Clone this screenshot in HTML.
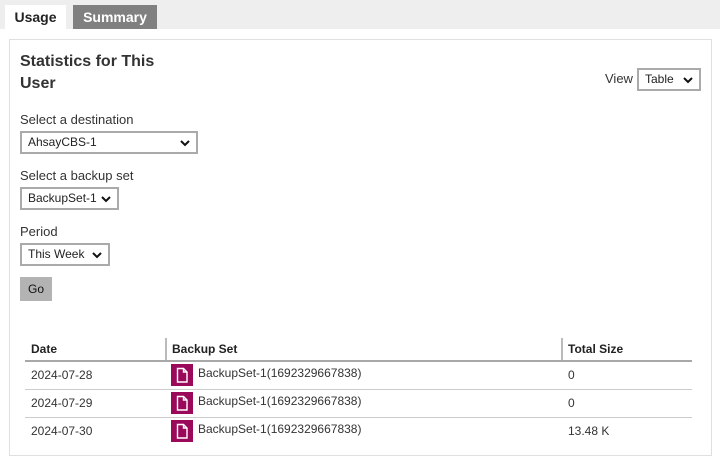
<!DOCTYPE html>
<html><head><meta charset="utf-8"><style>
*{margin:0;padding:0;box-sizing:border-box}
body{width:720px;height:465px;background:#fff;font-family:"Liberation Sans",Arial,sans-serif;color:#333;position:relative;overflow:hidden;font-size:14px}
.a{position:absolute}
.top{left:0;top:0;width:720px;height:29px;background:#eeeeee}
.tab{top:5px;height:24px;font-weight:bold;font-size:14px;line-height:24px;text-align:center}
.panel{left:9px;top:39px;width:703px;height:417px;border:1px solid #e0e0e0}
.sel{border:2px solid #aaa;background:#fff;height:23px;font-size:12px;line-height:19px;padding-left:6px;color:#222}
.sel svg{position:absolute;right:6px;top:6px}
.lbl{font-size:13px;color:#333}
.th{font-weight:bold;font-size:12px;color:#222}
.td{font-size:12px;color:#333}
.ic{width:22px;height:22px;background:#9b0a5a}
</style></head><body>
<div class="a top"></div>
<div class="a tab" style="left:5px;width:61px;background:#fff;color:#222">Usage</div>
<div class="a tab" style="left:73px;width:84px;background:#808080;color:#fff">Summary</div>
<div class="a panel"></div>
<div class="a" style="left:20px;top:51px;font-size:16px;font-weight:bold;line-height:22px;color:#333">Statistics for This<br>User</div>
<div class="a lbl" style="left:605px;top:71px">View</div>
<div class="a sel" style="left:637px;top:68px;width:64px">Table<svg width="10" height="8" viewBox="0 0 10 8"><path d="M1 2l4 4 4-4" stroke="#111" stroke-width="2" fill="none"/></svg></div>
<div class="a lbl" style="left:20px;top:112px">Select a destination</div>
<div class="a sel" style="left:20px;top:131px;width:178px">AhsayCBS-1<svg width="10" height="8" viewBox="0 0 10 8"><path d="M1 2l4 4 4-4" stroke="#111" stroke-width="2" fill="none"/></svg></div>
<div class="a lbl" style="left:20px;top:168px">Select a backup set</div>
<div class="a sel" style="left:20px;top:187px;width:99px">BackupSet-1<svg width="10" height="8" viewBox="0 0 10 8"><path d="M1 2l4 4 4-4" stroke="#111" stroke-width="2" fill="none"/></svg></div>
<div class="a lbl" style="left:20px;top:224px">Period</div>
<div class="a sel" style="left:20px;top:243px;width:90px">This Week<svg width="10" height="8" viewBox="0 0 10 8"><path d="M1 2l4 4 4-4" stroke="#111" stroke-width="2" fill="none"/></svg></div>
<div class="a" style="left:20px;top:277px;width:32px;height:24px;background:#b3b3b3;font-size:12px;line-height:24px;text-align:center;color:#111">Go</div>

<div class="a th" style="left:31px;top:342px">Date</div>
<div class="a" style="left:165px;top:338px;width:2px;height:22px;background:#bbb"></div>
<div class="a th" style="left:172px;top:342px">Backup Set</div>
<div class="a" style="left:561px;top:338px;width:2px;height:22px;background:#bbb"></div>
<div class="a th" style="left:568px;top:342px">Total Size</div>
<div class="a" style="left:25px;top:360px;width:667px;height:2px;background:#a8a8a8"></div>
<div class="a" style="left:25px;top:389px;width:667px;height:1px;background:#ccc"></div>
<div class="a" style="left:25px;top:417px;width:667px;height:1px;background:#ccc"></div>

<div class="a td" style="left:31px;top:368px">2024-07-28</div>
<div class="a td" style="left:31px;top:396px">2024-07-29</div>
<div class="a td" style="left:31px;top:424px">2024-07-30</div>
<div class="a ic" style="left:171px;top:364px"><svg width="22" height="22" viewBox="0 0 22 22"><path d="M6.5 4.5h6l3.5 3.5v10h-9.5z M12.5 4.5v3.5h3.5" stroke="#fff" stroke-width="1.4" fill="none"/></svg></div>
<div class="a ic" style="left:171px;top:392px"><svg width="22" height="22" viewBox="0 0 22 22"><path d="M6.5 4.5h6l3.5 3.5v10h-9.5z M12.5 4.5v3.5h3.5" stroke="#fff" stroke-width="1.4" fill="none"/></svg></div>
<div class="a ic" style="left:171px;top:420px"><svg width="22" height="22" viewBox="0 0 22 22"><path d="M6.5 4.5h6l3.5 3.5v10h-9.5z M12.5 4.5v3.5h3.5" stroke="#fff" stroke-width="1.4" fill="none"/></svg></div>
<div class="a td" style="left:198px;top:366px">BackupSet-1(1692329667838)</div>
<div class="a td" style="left:198px;top:394px">BackupSet-1(1692329667838)</div>
<div class="a td" style="left:198px;top:422px">BackupSet-1(1692329667838)</div>
<div class="a td" style="left:568px;top:368px">0</div>
<div class="a td" style="left:568px;top:396px">0</div>
<div class="a td" style="left:568px;top:424px">13.48 K</div>
</body></html>
